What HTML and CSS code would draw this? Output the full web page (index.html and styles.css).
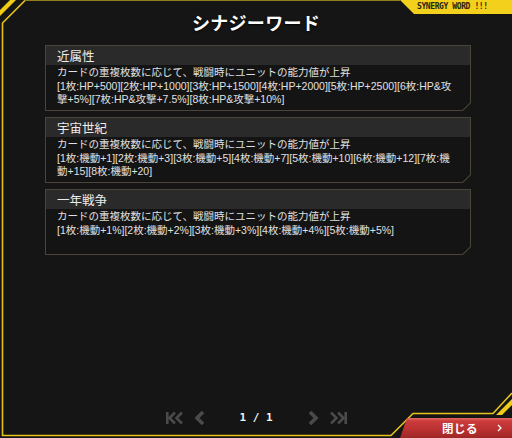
FILE: index.html
```html
<!DOCTYPE html>
<html lang="ja">
<head>
<meta charset="utf-8">
<title>シナジーワード</title>
<link rel="stylesheet" href="styles.css">
</head>
<body>
<div class="frame">
  <h1 class="title">シナジーワード</h1>
  <div class="cards">
    <div class="card"><div class="card-in">
      <div class="card-head">近属性</div>
      <div class="card-body">カードの重複枚数に応じて、戦闘時にユニットの能力値が上昇<br>[1枚:HP+500][2枚:HP+1000][3枚:HP+1500][4枚:HP+2000][5枚:HP+2500][6枚:HP&amp;攻撃+5%][7枚:HP&amp;攻撃+7.5%][8枚:HP&amp;攻撃+10%]</div>
    </div></div>
    <div class="card"><div class="card-in">
      <div class="card-head">宇宙世紀</div>
      <div class="card-body">カードの重複枚数に応じて、戦闘時にユニットの能力値が上昇<br>[1枚:機動+1][2枚:機動+3][3枚:機動+5][4枚:機動+7][5枚:機動+10][6枚:機動+12][7枚:機動+15][8枚:機動+20]</div>
    </div></div>
    <div class="card"><div class="card-in">
      <div class="card-head">一年戦争</div>
      <div class="card-body">カードの重複枚数に応じて、戦闘時にユニットの能力値が上昇<br>[1枚:機動+1%][2枚:機動+2%][3枚:機動+3%][4枚:機動+4%][5枚:機動+5%]</div>
    </div></div>
  </div>

  <div class="pager">
    <svg class="pg-icon pg-dbl" viewBox="0 0 18 14" width="18" height="14"><rect x="1" y="1" width="2.6" height="12" fill="currentColor"/><polyline points="10,1.5 4.5,7 10,12.5" fill="none" stroke="currentColor" stroke-width="2.6"/><polyline points="17,1.5 11.5,7 17,12.5" fill="none" stroke="currentColor" stroke-width="2.6"/></svg>
    <svg class="pg-icon pg-one" viewBox="0 0 12 14" width="12" height="14"><polyline points="10,1 4,7 10,13" fill="none" stroke="currentColor" stroke-width="3.6"/></svg>
    <span class="pg-num">1 / 1</span>
    <svg class="pg-icon pg-one" viewBox="0 0 12 14" width="12" height="14"><polyline points="2,1 8,7 2,13" fill="none" stroke="currentColor" stroke-width="3.6"/></svg>
    <svg class="pg-icon pg-dbl" viewBox="0 0 18 14" width="18" height="14"><polyline points="1,1.5 6.5,7 1,12.5" fill="none" stroke="currentColor" stroke-width="2.6"/><polyline points="8,1.5 13.5,7 8,12.5" fill="none" stroke="currentColor" stroke-width="2.6"/><rect x="14.4" y="1" width="2.6" height="12" fill="currentColor"/></svg>
  </div>

  <svg class="deco" viewBox="0 0 512 438" width="512" height="438">
    <line x1="25" y1="0.5" x2="400" y2="0.5" stroke="#8f7f18" stroke-width="1"/>
    <polyline points="512,393 493,413.5 413,413.5 391,435.5 2.5,435.5 2.5,23 25,0.5" fill="none" stroke="#e6c41c" stroke-width="1.6"/>
    <polygon points="0,10 10,0 16,0 0,16" fill="#f0cc14"/>
    <polygon points="496,415 502,415 512,405 512,399" fill="#f0cc14"/>
  </svg>

  <div class="tab">SYNERGY WORD !!!</div>

  <div class="close">
    <span class="close-label">閉じる</span>
    <svg class="close-arrow" viewBox="0 0 5 8" width="5" height="8"><polyline points="1,1 4,4 1,7" fill="none" stroke="#ffffff" stroke-width="1.3"/></svg>
  </div>
</div>
</body>
</html>
```

FILE: styles.css
```css
* { box-sizing: border-box; }

html, body {
  margin: 0;
  padding: 0;
  background: #0b0b0b;
}

body {
  width: 512px;
  height: 438px;
  overflow: hidden;
  font-family: "Liberation Sans", "Noto Sans CJK JP", sans-serif;
  color: #e2e2e2;
}

.frame {
  position: relative;
  width: 512px;
  height: 438px;
  background: #151515;
  display: flex;
  flex-direction: column;
  padding-top: 11px;
}

.title {
  margin: 0;
  text-align: center;
  font-family: "Noto Sans CJK JP", sans-serif;
  font-weight: 700;
  font-size: 18px;
  line-height: 22px;
  color: #ffffff;
  letter-spacing: 0.3px;
  text-shadow: 0 1px 2px rgba(0,0,0,0.8);
}

.cards {
  margin: 12px 0 0 45px;
  width: 426px;
  display: flex;
  flex-direction: column;
  gap: 6px;
}

.card {
  background: #4a4538;
  padding: 1px;
  clip-path: polygon(0 0, 100% 0, 100% calc(100% - 8px), calc(100% - 8px) 100%, 0 100%);
}

.card-in {
  background: #141414;
  clip-path: polygon(0 0, 100% 0, 100% calc(100% - 7.6px), calc(100% - 7.6px) 100%, 0 100%);
}

.card-head {
  height: 19px;
  background: #2a2a2a;
  padding-left: 11px;
  font-family: "Noto Sans CJK JP", sans-serif;
  font-size: 12.5px;
  line-height: 19px;
  color: #ececec;
}

.card-body {
  height: 45px;
  padding: 1px 12px 0 11px;
  font-size: 10.5px;
  line-height: 13.5px;
  color: #e0e0e0;
  overflow: hidden;
}

.pager {
  margin-top: auto;
  margin-bottom: 13px;
  height: 14px;
  display: flex;
  justify-content: center;
  align-items: center;
  color: #4a4a4a;
}

.pg-icon { display: block; }
.pg-dbl + .pg-one { margin-left: 10px; }
.pg-one + .pg-dbl { margin-left: 10px; }

.pg-num {
  width: 33px;
  margin: 0 35px;
  text-align: center;
  font-family: "DejaVu Sans Mono", monospace;
  font-weight: 700;
  font-size: 11px;
  line-height: 14px;
  color: #f2f2f2;
  white-space: pre;
}

.deco {
  position: absolute;
  left: 0;
  top: 0;
  pointer-events: none;
}

.tab {
  position: absolute;
  top: 0;
  right: 0;
  width: 112px;
  height: 14px;
  padding-left: 17px;
  background: #f2d01c;
  clip-path: polygon(0 0, 100% 0, 100% 100%, 14px 100%);
  font-family: "DejaVu Sans Mono", monospace;
  font-weight: 700;
  font-size: 8px;
  letter-spacing: -0.4px;
  line-height: 14px;
  color: #2a2410;
}

.close {
  position: absolute;
  right: 0;
  bottom: 0;
  width: 112px;
  height: 20px;
  display: flex;
  align-items: center;
  padding-left: 42px;
  background: linear-gradient(#e26a66 0px, #cc3c3a 3px, #b83030 12px, #9f2626 20px);
  clip-path: polygon(7px 0, 100% 0, 100% 100%, 0 100%);
}

.close-label {
  font-family: "Noto Sans CJK JP", sans-serif;
  font-weight: 700;
  font-size: 11.5px;
  line-height: 20px;
  color: #ffffff;
  letter-spacing: 0.5px;
}

.close-arrow {
  display: block;
  margin-left: 19px;
}
```
